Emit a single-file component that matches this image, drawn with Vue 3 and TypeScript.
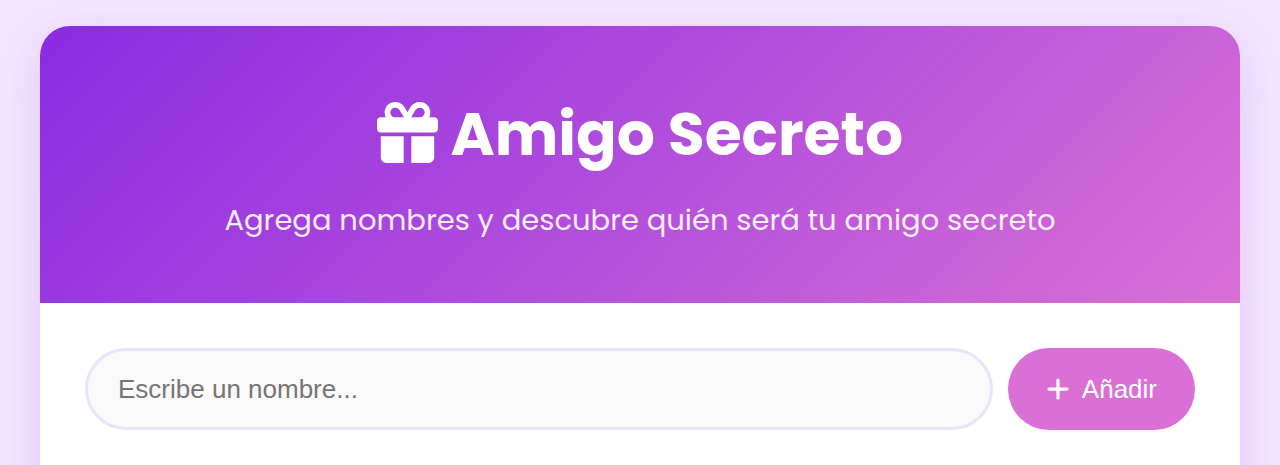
<script setup lang="ts">
import { ref } from 'vue'

const name = ref<string>('')
const names = ref<string[]>([])

function addName(): void {
  const value = name.value.trim()
  if (!value) return
  names.value.push(value)
  name.value = ''
}
</script>

<template>
  <div class="page">
    <main class="card">
      <header class="hero">
        <h1>
          <svg class="gift" viewBox="0 0 512 512" aria-hidden="true">
            <path d="M190.500 68.800L225.300 128H224 152c-22.100 0-40-17.900-40-40s17.900-40 40-40h2.200c14.900 0 28.800 7.900 36.300 20.800zM64 88c0 14.400 3.500 28 9.600 40H32c-17.700 0-32 14.300-32 32v64c0 17.700 14.300 32 32 32H480c17.700 0 32-14.300 32-32V160c0-17.700-14.300-32-32-32H438.400c6.100-12 9.600-25.600 9.600-40c0-48.600-39.400-88-88-88h-2.200c-31.900 0-61.500 16.900-77.700 44.400L256 85.500l-24.100-41C215.700 16.900 186.100 0 154.200 0H152C103.400 0 64 39.400 64 88zm336 0c0 22.100-17.900 40-40 40H288h-1.300l34.800-59.200C329.100 55.900 342.900 48 357.800 48H360c22.100 0 40 17.900 40 40zM32 288V464c0 26.500 21.500 48 48 48H224V288H32zM288 512H432c26.500 0 48-21.500 48-48V288H288V512z" />
          </svg>
          Amigo Secreto
        </h1>
        <p>Agrega nombres y descubre quién será tu amigo secreto</p>
      </header>
      <form class="entry" @submit.prevent="addName">
        <input v-model="name" type="text" aria-label="Nombre" placeholder="Escribe un nombre..." />
        <button type="submit">
          <svg class="plus" viewBox="0 0 448 512" aria-hidden="true">
            <path d="M256 80c0-17.700-14.300-32-32-32s-32 14.300-32 32V224H48c-17.700 0-32 14.300-32 32s14.300 32 32 32H192V432c0 17.700 14.300 32 32 32s32-14.300 32-32V288H400c17.700 0 32-14.300 32-32s-14.300-32-32-32H256V80z" />
          </svg>
          <span>Añadir</span>
        </button>
      </form>
    </main>
  </div>
</template>

<style>
body {
  background: #f3e5ff;
}
</style>

<style scoped>
.page {
  padding: 26px 40px;
  font-family: Poppins, "Open Sans", "Liberation Sans", sans-serif;
}

.card {
  overflow: hidden;
  padding-bottom: 60px;
  border-radius: 30px;
  background: #fff;
  box-shadow: 0 15px 45px rgba(138, 43, 226, 0.15);
}

.hero {
  padding: 60px;
  background: linear-gradient(135deg, #8a2be2, #da70d6);
  color: #fff;
  text-align: center;
}

h1 {
  margin: 0 0 15px;
  font-size: 60px;
  line-height: 96px;
  font-weight: 700;
}

.gift {
  width: 61px;
  height: 61px;
  vertical-align: -8px;
  fill: currentColor;
}

p {
  margin: 0;
  font-size: 29px;
  line-height: 46px;
  opacity: 0.9;
}

.entry {
  display: flex;
  gap: 15px;
  padding: 45px;
}

input,
button {
  font-family: "Liberation Sans", Arial, sans-serif;
  font-size: 26px;
  line-height: 32px;
}

input {
  flex: 1;
  min-width: 0;
  padding: 22px 30px;
  border: 3px solid #e6e6fa;
  border-radius: 50px;
  background: #fafafa;
  outline: none;
}

input::placeholder {
  color: #757575;
}

button {
  display: flex;
  align-items: center;
  gap: 12px;
  padding: 25px 38px;
  border: 0;
  border-radius: 50px;
  background: #da70d6;
  color: #fff;
  cursor: pointer;
}

.plus {
  width: 24px;
  height: 26px;
  fill: currentColor;
}
</style>
